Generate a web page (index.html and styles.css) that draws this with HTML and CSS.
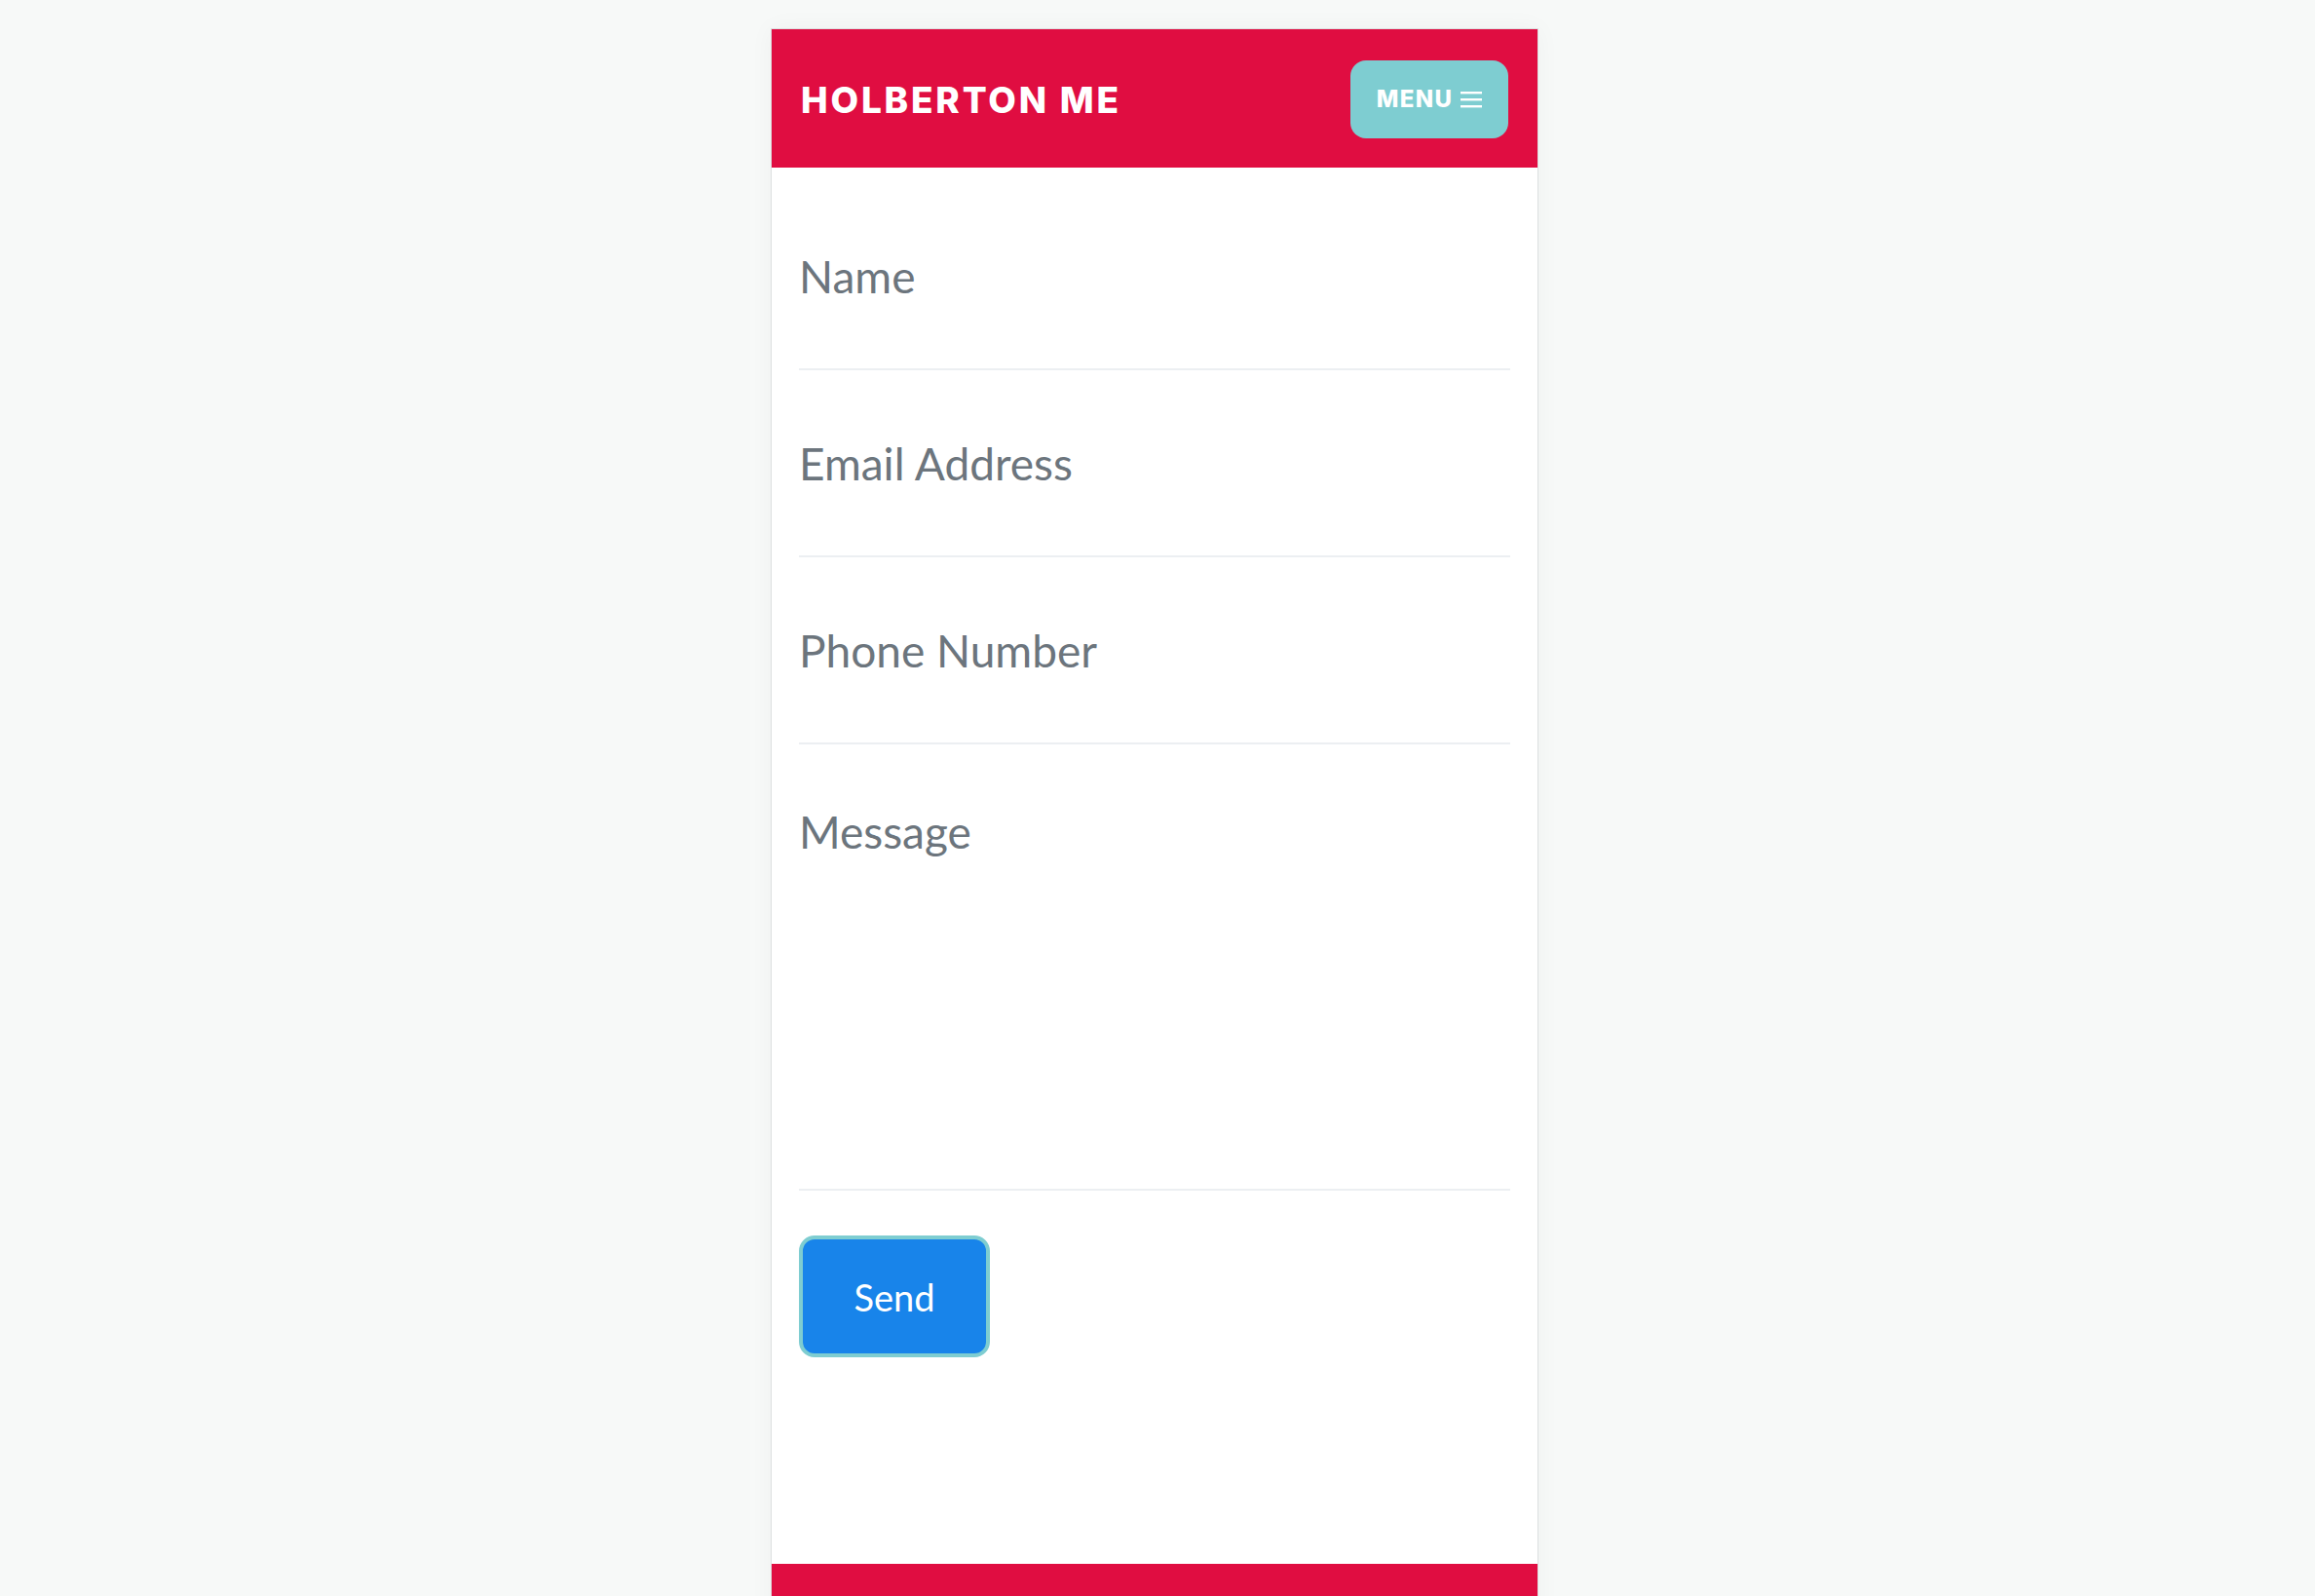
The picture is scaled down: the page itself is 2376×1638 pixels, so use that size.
FILE: index.html
```html
<!DOCTYPE html>
<html lang="en">
<head>
<meta charset="utf-8">
<title>Holberton Me - Contact</title>
<link rel="stylesheet" href="styles.css">
</head>
<body>
<div class="phone">
  <header class="topbar">
    <div class="brand">HOLBERTON ME</div>
    <button class="menu-btn" type="button">
      <span class="menu-label">MENU</span>
      <svg class="bars" width="22" height="18" viewBox="0 0 22 18" aria-hidden="true">
        <rect x="0" y="1" width="22" height="2.4" fill="#fff"/>
        <rect x="0" y="8" width="22" height="2.4" fill="#fff"/>
        <rect x="0" y="15" width="22" height="2.4" fill="#fff"/>
      </svg>
    </button>
  </header>
  <form class="contact">
    <input class="field" type="text" placeholder="Name">
    <input class="field" type="email" placeholder="Email Address">
    <input class="field" type="tel" placeholder="Phone Number">
    <textarea class="field message" placeholder="Message"></textarea>
    <div class="actions">
      <button class="send" type="button">Send</button>
    </div>
  </form>
  <footer class="bottombar"></footer>
</div>
</body>
</html>
```

FILE: styles.css
```css
html, body {
  margin: 0;
  padding: 0;
}
body {
  background: #f7f9f8;
  padding-right: 6px;
  font-family: "Lato", "Liberation Sans", sans-serif;
  overflow: hidden;
}
.phone {
  width: 786px;
  margin: 29px auto 0;
  background: #ffffff;
  border: 1px solid #dcdfe0;
  border-bottom: none;
  box-shadow: 0 0 24px rgba(0, 0, 0, 0.04);
}
.topbar {
  height: 142px;
  background: #e00d41;
  display: flex;
  align-items: center;
  justify-content: space-between;
  padding: 0 30px 0 30px;
  box-sizing: border-box;
}
.brand {
  font-family: "Inter", "Liberation Sans", sans-serif;
  font-weight: 800;
  font-size: 37px;
  letter-spacing: 2.8px;
  color: #ffffff;
  padding-top: 2px;
}
.menu-btn {
  width: 162px;
  height: 80px;
  margin-top: 1px;
  background: #7ecdd1;
  border: none;
  border-radius: 16px;
  display: flex;
  align-items: center;
  justify-content: center;
  gap: 8px;
  padding: 0;
  cursor: pointer;
}
.menu-label {
  font-family: "Inter", "Liberation Sans", sans-serif;
  font-weight: 800;
  font-size: 24px;
  color: #ffffff;
  letter-spacing: 1.3px;
}
.bars {
  display: block;
}
.contact {
  padding: 16px 28px 212px;
  display: flex;
  flex-direction: column;
}
.field {
  display: block;
  width: 100%;
  box-sizing: border-box;
  border: none;
  border-bottom: 2px solid #eceff2;
  outline: none;
  background: transparent;
  font-family: "Lato", "Liberation Sans", sans-serif;
  font-size: 46px;
  color: #495057;
  padding: 0;
  margin: 0;
  height: 192px;
}
.field::placeholder {
  color: #6c757d;
  opacity: 1;
}
.message {
  height: 458px;
  padding-top: 62px;
  resize: none;
  line-height: normal;
}
.actions {
  margin-top: 46px;
  display: flex;
}
.send {
  width: 196px;
  height: 125px;
  box-sizing: border-box;
  background: #1884ea;
  border: 4px solid #7ecdd1;
  border-radius: 16px;
  color: #ffffff;
  font-family: "Lato", "Liberation Sans", sans-serif;
  font-size: 38px;
  padding: 0;
  cursor: pointer;
}
.bottombar {
  height: 80px;
  background: #e00d41;
}
```
